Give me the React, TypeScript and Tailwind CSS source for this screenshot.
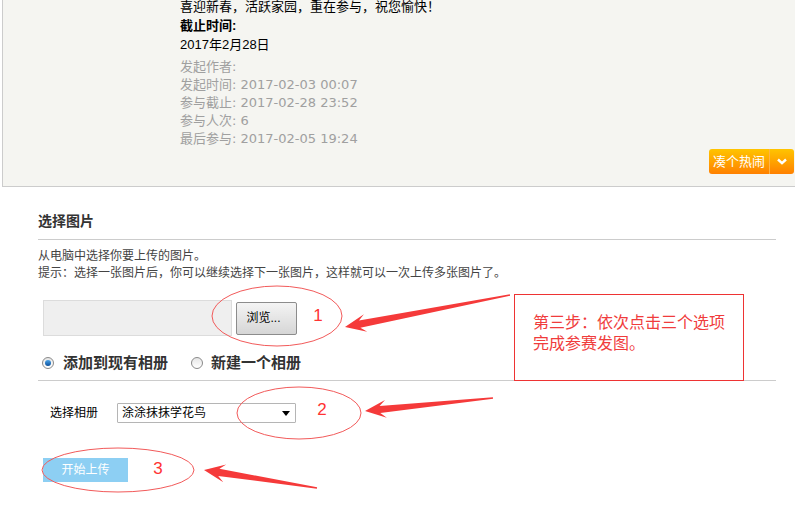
import React from 'react'

const font = { fontFamily: '"Liberation Sans", "Noto Sans CJK SC", sans-serif' }
const metaFont = { fontFamily: '"DejaVu Sans", "Noto Sans CJK SC", sans-serif' }

type Pt = [number, number]

// swept-back arrow polygon from tail to tip
function arrowPoints(tail: Pt, tip: Pt) {
  const dx = tip[0] - tail[0]
  const dy = tip[1] - tail[1]
  const len = Math.hypot(dx, dy)
  const ux = dx / len, uy = dy / len
  const nx = -uy, ny = ux
  const at = (back: number, side: number): string =>
    `${(tip[0] - ux * back + nx * side).toFixed(1)},${(tip[1] - uy * back + ny * side).toFixed(1)}`
  return [
    `${tip[0]},${tip[1]}`,
    at(21, 9),
    at(15, 3.6),
    `${(tail[0] + nx * 0.7).toFixed(1)},${(tail[1] + ny * 0.7).toFixed(1)}`,
    `${(tail[0] - nx * 0.7).toFixed(1)},${(tail[1] - ny * 0.7).toFixed(1)}`,
    at(15, -3.6),
    at(21, -9),
  ].join(' ')
}

function Radio({ checked }: { checked?: boolean }) {
  return (
    <span className="w-[12px] h-[12px] rounded-full border border-[#8a8a8a] bg-linear-to-b from-[#e6e6e6] to-[#ffffff] flex items-center justify-center shrink-0">
      {checked && <span className="w-[6px] h-[6px] rounded-full bg-linear-to-b from-[#4aa3e8] to-[#0b4f9a]" />}
    </span>
  )
}

function Annotations() {
  return (
    <svg className="absolute left-0 top-0 pointer-events-none" width={795} height={517}>
      <ellipse cx={277} cy={316} rx={65} ry={30} fill="none" stroke="#f25a5a" strokeWidth={1} />
      <ellipse cx={299} cy={413} rx={62} ry={26} fill="none" stroke="#f25a5a" strokeWidth={1} />
      <ellipse cx={118} cy={470} rx={76} ry={22} fill="none" stroke="#f25a5a" strokeWidth={1} />
      <polygon points={arrowPoints([510, 295], [345, 327])} fill="#f53a3a" />
      <polygon points={arrowPoints([493, 398], [365, 411])} fill="#f53a3a" />
      <polygon points={arrowPoints([317, 488], [204, 470])} fill="#f53a3a" />
      <text x={318} y={321} fontSize={17} fill="#f33" textAnchor="middle" style={font}>1</text>
      <text x={322} y={415} fontSize={17} fill="#f33" textAnchor="middle" style={font}>2</text>
      <text x={158} y={474} fontSize={17} fill="#f33" textAnchor="middle" style={font}>3</text>
    </svg>
  )
}

export default function App() {
  return (
    <div className="relative w-[795px] h-[517px] bg-white overflow-hidden text-[#333]" style={font}>
      {/* top info panel */}
      <div className="ml-[2px] h-[187px] bg-[#f5f5f1] border-l border-b border-[#cccccc] flex flex-col">
        <div className="pl-[177px] -mt-[3px] text-[13px] leading-[19px] text-black">
          <p>喜迎新春，活跃家园，重在参与，祝您愉快！</p>
          <p className="font-bold">截止时间:</p>
          <p>2017年2月28日</p>
        </div>
        <div className="pl-[177px] mt-[4px] text-[13px] leading-[18px] text-[#a0a0a0]" style={metaFont}>
          <p>发起作者:</p>
          <p>发起时间: 2017-02-03 00:07</p>
          <p>参与截止: 2017-02-28 23:52</p>
          <p>参与人次: 6</p>
          <p>最后参与: 2017-02-05 19:24</p>
        </div>
        <div className="self-end mr-[1px] mt-[1px] w-[85px] h-[25px] rounded-[3px] bg-linear-to-b from-[#ffc400] to-[#ff8000] flex items-stretch text-white text-[13px]">
          <span className="flex-1 flex items-center justify-center">凑个热闹</span>
          <span className="w-px bg-[#ffb347]" />
          <span className="w-[24px] flex items-center justify-center">
            <svg width="10" height="7" viewBox="0 0 10 7">
              <path d="M1 1.5 L5 5.2 L9 1.5" fill="none" stroke="#fff" strokeWidth="2.4" />
            </svg>
          </span>
        </div>
      </div>

      {/* upload section */}
      <div className="ml-[38px] w-[738px]">
        <div className="mt-[24px] pb-[8px] border-b border-[#cccccc] text-[14px] leading-[20px] font-bold text-[#333]">选择图片</div>
        <div className="mt-[8px] text-[12px] leading-[17px] text-[#444]">
          <p>从电脑中选择你要上传的图片。</p>
          <p>提示：选择一张图片后，你可以继续选择下一张图片，这样就可以一次上传多张图片了。</p>
        </div>

        <div className="mt-[18px] ml-[5px] flex items-center gap-[4px]">
          <div className="w-[189px] h-[36px] bg-[#efefef] border border-[#dcdcdc]" />
          <button className="w-[61px] h-[33px] rounded-[2px] border border-[#8c8c8c] bg-linear-to-b from-[#f4f4f4] to-[#d6d6d6] text-[12px] text-black pr-[6px]">浏览...</button>
        </div>

        <div className="mt-[17px] pb-[7px] border-b border-[#cccccc] flex items-center text-[15px] leading-[20px] font-bold text-[#333]">
          <span className="ml-[4px]"><Radio checked /></span>
          <span className="ml-[9px]">添加到现有相册</span>
          <span className="ml-[23px]"><Radio /></span>
          <span className="ml-[8px]">新建一个相册</span>
        </div>

        <div className="mt-[22px] flex items-center text-[12px] text-black">
          <span className="ml-[12px] w-[67px]">选择相册</span>
          <div className="w-[179px] h-[20px] border border-[#b5b5b5] rounded-[1px] bg-white flex items-center pl-[4px] pr-[5px]">
            <span className="flex-1">涂涂抹抹学花鸟</span>
            <svg width="8" height="5" viewBox="0 0 8 5"><path d="M0 0 H8 L4 5 Z" fill="#000" /></svg>
          </div>
        </div>

        <button className="mt-[35px] ml-[5px] w-[85px] h-[24px] bg-[#8dcff3] text-white text-[12px] flex items-center justify-center">开始上传</button>
      </div>

      {/* step note box */}
      <div className="absolute left-[514px] top-[294px] w-[230px] h-[87px] border border-[#ee3333] bg-white pl-[18px] pt-[17px] text-[16px] leading-[21px] text-[#f03c3c]">
        <p>第三步：依次点击三个选项</p>
        <p>完成参赛发图。</p>
      </div>

      <Annotations />
    </div>
  )
}
